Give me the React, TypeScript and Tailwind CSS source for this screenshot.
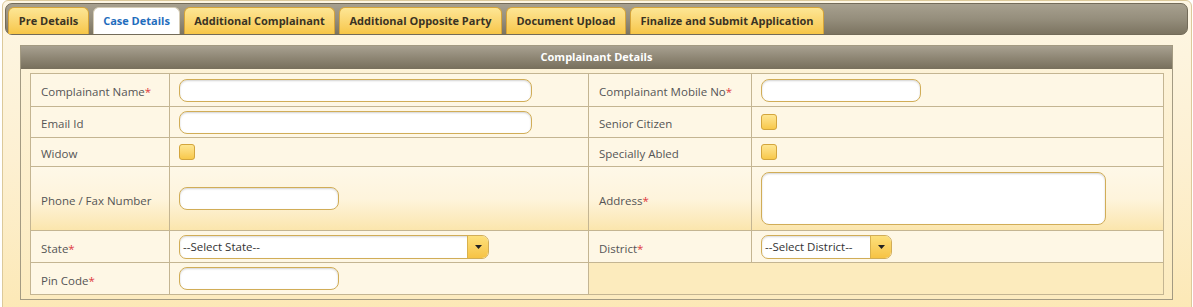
import React from "react"

const tabs = [
  { label: "Pre Details", w: "w-[81px]", active: false },
  { label: "Case Details", w: "w-[87px]", active: true },
  { label: "Additional Complainant", w: "w-[151px]", active: false },
  { label: "Additional Opposite Party", w: "w-[163px]", active: false },
  { label: "Document Upload", w: "w-[120px]", active: false },
  { label: "Finalize and Submit Application", w: "w-[194px]", active: false },
]

function Label({ text, required }: { text: string; required?: boolean }) {
  return (
    <span className="text-[11.5px] text-[#555]">
      {text}
      {required && <span className="text-[#e0393e]">*</span>}
    </span>
  )
}

function TextBox({ w }: { w: string }) {
  return (
    <input
      type="text"
      className={`${w} block h-[23px] rounded-[8px] border border-[#d1ad57] bg-white shadow-[inset_0_1px_2px_rgba(0,0,0,0.18)] outline-none`}
    />
  )
}

function CheckBox() {
  return (
    <div className="h-[16px] w-[16px] rounded-[3px] border border-[#d3a53d] bg-gradient-to-b from-[#fee691] to-[#f8c849]" />
  )
}

function Select({ w, text }: { w: string; text: string }) {
  return (
    <div
      className={`${w} flex h-[24px] overflow-hidden rounded-[7px] border border-[#d1ad57] bg-white shadow-[inset_0_1px_2px_rgba(0,0,0,0.15)]`}
    >
      <span className="flex-1 pl-[3px] text-[11.5px] leading-[22px] text-[#333]">{text}</span>
      <span className="flex w-[21px] items-center justify-center border-l border-[#d9b24d] bg-gradient-to-b from-[#fde07a] to-[#f6c344]">
        <svg width="7" height="4" viewBox="0 0 7 4">
          <path d="M0 0h7L3.5 4z" fill="#222" />
        </svg>
      </span>
    </div>
  )
}

const cell = "border border-[#c4b592] align-middle"
const labelCell = `${cell} pl-[10px]`
const fieldCell = `${cell} pl-[9px]`

export default function App() {
  return (
    <div className="h-[307px] w-[1193px] overflow-hidden bg-white font-['Open_Sans',sans-serif]">
      <div className="ml-[2px] h-[320px] w-[1190px] rounded-t-[6px] border border-[#dcc99a] bg-gradient-to-b from-[#fdf6e4] via-[#fdf0d2] to-[#fce8b4] px-[2px] pt-[2px]">
        {/* Tab strip */}
        <div className="flex h-[32px] w-[1183px] items-end gap-[4px] rounded-[7px] border border-[#736b59] bg-gradient-to-b from-[#a7a08f] via-[#958e7c] to-[#7c7461] pl-[2px]">
          {tabs.map((t) => (
            <div
              key={t.label}
              className={`${t.w} flex h-[27px] items-center justify-center rounded-t-[6px] border border-b-0 text-[11px] font-bold ${
                t.active
                  ? "border-[#d6cdb6] bg-white text-[#1f6dbd]"
                  : "border-[#d6a53a] bg-gradient-to-b from-[#fde694] to-[#f7c646] text-[#3a3323]"
              }`}
            >
              {t.label}
            </div>
          ))}
        </div>

        {/* Section */}
        <div className="ml-[15px] mt-[10px] w-[1153px] border border-[#a39a82] bg-gradient-to-b from-[#fdf3da] to-[#fcebbf] px-[9px] pb-[4px]">
          <div className="-mx-[9px] flex h-[23px] items-center justify-center bg-gradient-to-b from-[#a8a191] via-[#8f8775] to-[#776f5c] text-[11px] font-bold text-white">
            Complainant Details
          </div>
          <table className="mt-[4px] w-[1133px] table-fixed border-collapse border border-[#a89a7b]">
            <colgroup>
              <col className="w-[139px]" />
              <col className="w-[419px]" />
              <col className="w-[163px]" />
              <col className="w-[412px]" />
            </colgroup>
            <tbody className="bg-[#fef7e5]">
              <tr className="h-[33px]">
                <td className={labelCell}><Label text="Complainant Name" required /></td>
                <td className={fieldCell}><TextBox w="w-[353px]" /></td>
                <td className={labelCell}><Label text="Complainant Mobile No" required /></td>
                <td className={fieldCell}><TextBox w="w-[160px]" /></td>
              </tr>
              <tr className="h-[31px]">
                <td className={labelCell}><Label text="Email Id" /></td>
                <td className={fieldCell}><TextBox w="w-[353px]" /></td>
                <td className={labelCell}><Label text="Senior Citizen" /></td>
                <td className={fieldCell}><CheckBox /></td>
              </tr>
              <tr className="h-[29px]">
                <td className={labelCell}><Label text="Widow" /></td>
                <td className={fieldCell}><CheckBox /></td>
                <td className={labelCell}><Label text="Specially Abled" /></td>
                <td className={fieldCell}><CheckBox /></td>
              </tr>
              <tr className="h-[64px] bg-gradient-to-b from-[#fef8e8] via-[#fef4dc] to-[#fbe5ab]">
                <td className={labelCell}><Label text="Phone / Fax Number" /></td>
                <td className={fieldCell}><TextBox w="w-[160px]" /></td>
                <td className={labelCell}><Label text="Address" required /></td>
                <td className={fieldCell}>
                  <textarea className="block h-[53px] w-[345px] resize-none rounded-[8px] border border-[#d1ad57] bg-white shadow-[inset_0_1px_2px_rgba(0,0,0,0.18)] outline-none" />
                </td>
              </tr>
              <tr className="h-[32px]">
                <td className={labelCell}><Label text="State" required /></td>
                <td className={fieldCell}><Select w="w-[310px]" text="--Select State--" /></td>
                <td className={labelCell}><Label text="District" required /></td>
                <td className={fieldCell}><Select w="w-[131px]" text="--Select District--" /></td>
              </tr>
              <tr className="h-[32px]">
                <td className={labelCell}><Label text="Pin Code" required /></td>
                <td className={fieldCell}><TextBox w="w-[160px]" /></td>
                <td colSpan={2} className={`${cell} bg-[#fcebbd]`} />
              </tr>
            </tbody>
          </table>
        </div>
      </div>
    </div>
  )
}
